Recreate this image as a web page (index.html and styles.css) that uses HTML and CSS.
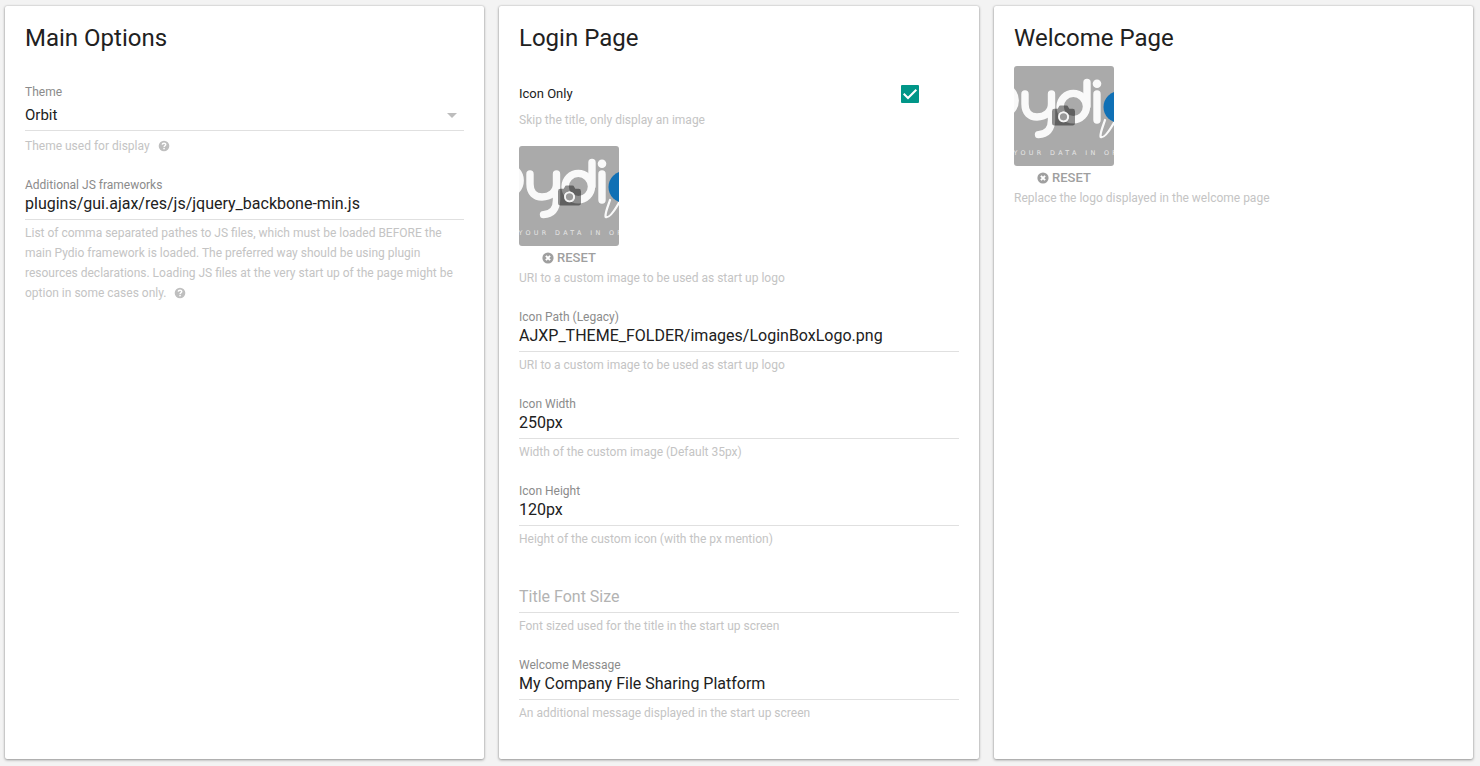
FILE: index.html
```html
<!DOCTYPE html>
<html lang="en">
<head>
<meta charset="utf-8">
<title>Options</title>
<link rel="stylesheet" href="styles.css">
</head>
<body>
<svg class="defs" width="0" height="0">
  <defs>
    <symbol id="logo" viewBox="0 0 100 100">
      <rect width="100" height="100" fill="#aaa"/>
      <g fill="none" stroke="#f9f9f9" stroke-width="7.4" stroke-linecap="round">
        <circle cx="-13" cy="34.500" r="14.200"/>
        <path d="M11 28V38C11 47 16 51 23 51C31 51 37.500 46 37.500 38M37.500 28V54C37.500 63 33 68.300 24.500 68.600"/>
        <circle cx="59.300" cy="40.600" r="13.200"/>
        <path d="M73 16.500V40M83 28V54"/>
        <path d="M91 54C89 60 85.500 68 86.700 71C90 72.500 96 64 101 55" stroke-width="2.300"/>
      </g>
      <circle cx="83" cy="17.700" r="4.300" fill="#f9f9f9"/>
      <circle cx="105.500" cy="41" r="16" fill="#1070b5"/>
      <text class="tagline" x="-0.500" y="88.700" textLength="111">YOUR DATA IN ORB</text>
    </symbol>
    <symbol id="camera" viewBox="0 0 24 21">
      <path class="camera-body" fill-rule="evenodd" d="M2.500 3.500H6L7 1.500Q7.500 0 9 0H15Q16.500 0 17 1.500L18 3.500H21.500Q24 3.500 24 6V18.500Q24 21 21.500 21H2.500Q0 21 0 18.500V6Q0 3.500 2.500 3.500ZM12 6.200a5.700 5.700 0 1 0 0 11.400a5.700 5.700 0 1 0 0-11.400Z"/>
      <circle cx="12" cy="11.900" r="4.700" fill="#999" stroke="#f5f5f5" stroke-width="1.900"/>
    </symbol>
    <symbol id="help" viewBox="0 0 12 12">
      <circle cx="6" cy="6" r="5.300" fill="#bfbfbf"/>
      <path d="M4.200 4.600C4.400 2.600 7.800 2.700 7.700 4.600C7.600 5.800 6.100 5.700 6.100 7.100" fill="none" stroke="#fff" stroke-width="1.500"/>
      <rect x="5.300" y="7.800" width="1.500" height="1.500" fill="#fff"/>
    </symbol>
    <symbol id="clear" viewBox="0 0 12 12">
      <circle cx="6" cy="6" r="5.600" fill="#9f9f9f"/>
      <path d="M3.900 3.900L8.100 8.100M8.100 3.900L3.900 8.100" stroke="#fff" stroke-width="2"/>
    </symbol>
  </defs>
</svg>
<main class="board">
  <section class="card">
    <h2 class="title">Main Options</h2>
    <div class="field select">
      <div class="label">Theme</div>
      <div class="value">Orbit<span class="caret"></span></div>
      <p class="hint">Theme used for display <svg class="help"><use href="#help"/></svg></p>
    </div>
    <div class="field">
      <div class="label">Additional JS frameworks</div>
      <div class="value">plugins/gui.ajax/res/js/jquery_backbone-min.js</div>
      <p class="hint">List of comma separated pathes to JS files, which must be loaded BEFORE the<br>main Pydio framework is loaded. The preferred way should be using plugin<br>resources declarations. Loading JS files at the very start up of the page might be<br>option in some cases only. <svg class="help"><use href="#help"/></svg></p>
    </div>
  </section>
  <section class="card">
    <h2 class="title">Login Page</h2>
    <div class="toggle">
      <span class="toggle-label">Icon Only</span>
      <svg class="checkbox" viewBox="0 0 18 18"><rect width="18" height="18" rx="1" fill="#009688"/><path d="M2.700 8.800L7 13L15.300 4.700" fill="none" stroke="#fff" stroke-width="2"/></svg>
    </div>
    <p class="hint toggle-hint">Skip the title, only display an image</p>
    <div class="picture">
      <div class="thumb"><svg class="logo"><use href="#logo"/></svg><svg class="camera"><use href="#camera"/></svg></div>
      <div class="reset"><svg class="clear"><use href="#clear"/></svg>RESET</div>
      <p class="hint">URI to a custom image to be used as start up logo</p>
    </div>
    <div class="field">
      <div class="label">Icon Path (Legacy)</div>
      <div class="value">AJXP_THEME_FOLDER/images/LoginBoxLogo.png</div>
      <p class="hint">URI to a custom image to be used as start up logo</p>
    </div>
    <div class="field">
      <div class="label">Icon Width</div>
      <div class="value">250px</div>
      <p class="hint">Width of the custom image (Default 35px)</p>
    </div>
    <div class="field">
      <div class="label">Icon Height</div>
      <div class="value">120px</div>
      <p class="hint">Height of the custom icon (with the px mention)</p>
    </div>
    <div class="field">
      <div class="label"></div>
      <div class="value empty">Title Font Size</div>
      <p class="hint">Font sized used for the title in the start up screen</p>
    </div>
    <div class="field">
      <div class="label">Welcome Message</div>
      <div class="value">My Company File Sharing Platform</div>
      <p class="hint">An additional message displayed in the start up screen</p>
    </div>
  </section>
  <section class="card">
    <h2 class="title">Welcome Page</h2>
    <div class="picture">
      <div class="thumb"><svg class="logo"><use href="#logo"/></svg><svg class="camera camera-left"><use href="#camera"/></svg></div>
      <div class="reset"><svg class="clear"><use href="#clear"/></svg>RESET</div>
      <p class="hint">Replace the logo displayed in the welcome page</p>
    </div>
  </section>
</main>
</body>
</html>
```
FILE: styles.css
```css
* { box-sizing: border-box; }
body { margin: 0; background: #f3f3f3; font-family: Roboto, sans-serif; color: #212121; }
.defs { position: absolute; }
.board { display: grid; grid-template-columns: 479px 480px 479px; gap: 15px; height: 766px; padding: 6px 7px 7px 5px; }
.card { background: #fff; border-radius: 2px; padding: 0 20px; box-shadow: 0 1px 3px rgba(0,0,0,.36), 0 0 2px rgba(0,0,0,.2); }
.title { margin: 0; height: 60px; padding-top: 16px; font-size: 24px; line-height: 32px; font-weight: 400; }
.field { height: 87px; padding-top: 13px; }
.label { height: 16px; font-size: 12px; line-height: 16px; color: #8b8b8b; }
.value { display: flex; align-items: center; justify-content: space-between; height: 27px; padding-bottom: 5px; border-bottom: 1px solid #e0e0e0; font-size: 16px; line-height: 21px; }
.value.empty { color: #b3b3b3; }
.hint { margin: 0; padding-top: 3px; font-size: 12px; line-height: 20px; color: #c4c4c4; white-space: nowrap; }
.select { height: 98px; padding-top: 18px; }
.select .value { height: 31px; padding-bottom: 0; font-size: 15px; }
.select .hint { padding-top: 5px; }
.help { width: 12px; height: 12px; margin-left: 5px; vertical-align: -2px; }
.caret { border: 5px solid transparent; border-top-color: #bdbdbd; border-bottom: 0; margin: 1px 7px 0 0; }
.toggle { display: flex; align-items: center; justify-content: space-between; height: 36px; padding: 8px 40px 0 0; margin-top: 6px; font-size: 13px; }
.toggle-label { margin-bottom: 2px; }
.checkbox { width: 18px; height: 18px; }
.toggle-hint { height: 38px; padding-top: 2px; }
.picture { width: 100px; }
.thumb { position: relative; width: 100px; height: 100px; border-radius: 3px; overflow: hidden; }
.logo { display: block; width: 100px; height: 100px; }
.tagline { font-family: "DejaVu Sans", sans-serif; font-size: 6.400px; fill: #e6e6e6; }
.camera { position: absolute; left: 39px; top: 39px; width: 23px; height: 21px; }
.camera-left { left: 38px; }
.camera-body { fill: rgba(0,0,0,.43); }
.reset { display: flex; align-items: center; justify-content: center; gap: 3px; height: 23px; font-size: 13px; font-weight: 500; color: #9f9f9f; }
.clear { width: 12px; height: 12px; }
.picture .hint { height: 28px; margin-top: -1px; padding-top: 0; }
```
